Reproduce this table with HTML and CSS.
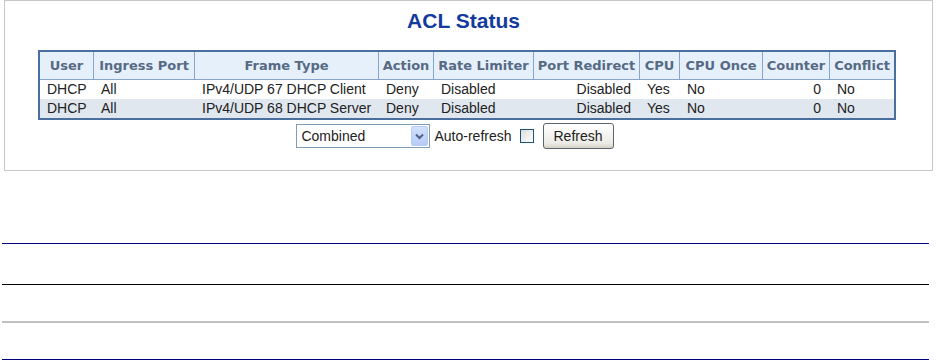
FILE: index.html
```html
<!DOCTYPE html>
<html lang="en">
<head>
  <meta charset="UTF-8" />
  <title>ACL Status</title>
  <link rel="stylesheet" href="styles.css">
</head>

<body>
  <div class="panel">
    <h1>ACL Status</h1>

    <table class="acl">
      <colgroup>
        <col style="width:53px"><col style="width:101px"><col style="width:184px">
        <col style="width:55px"><col style="width:100px"><col style="width:106px">
        <col style="width:40px"><col style="width:83px"><col style="width:67px">
        <col style="width:65px">
      </colgroup>
      <thead>
        <tr>
          <th>User</th>
          <th>Ingress Port</th>
          <th>Frame Type</th>
          <th>Action</th>
          <th>Rate Limiter</th>
          <th>Port Redirect</th>
          <th>CPU</th>
          <th>CPU Once</th>
          <th>Counter</th>
          <th>Conflict</th>
        </tr>
      </thead>
      <tbody>
        <tr>
          <td>DHCP</td>
          <td>All</td>
          <td>IPv4/UDP 67 DHCP Client</td>
          <td>Deny</td>
          <td>Disabled</td>
          <td class="num">Disabled</td>
          <td>Yes</td>
          <td>No</td>
          <td class="num">0</td>
          <td>No</td>
        </tr>
        <tr class="alt">
          <td>DHCP</td>
          <td>All</td>
          <td>IPv4/UDP 68 DHCP Server</td>
          <td>Deny</td>
          <td>Disabled</td>
          <td class="num">Disabled</td>
          <td>Yes</td>
          <td>No</td>
          <td class="num">0</td>
          <td>No</td>
        </tr>
      </tbody>
    </table>

    <div class="controls">
      <span class="select-wrap">
        <select class="select">
          <option>Combined</option>
          <option>Static</option>
          <option>IP Source Guard</option>
        </select>
        <span class="select-btn">
          <svg width="9" height="7" viewBox="0 0 9 7"><path d="M1 1.5 L4.5 5 L8 1.5" fill="none" stroke="#4d6185" stroke-width="2"/></svg>
        </span>
      </span>
      <label class="auto">Auto-refresh <input type="checkbox" class="check"></label>
      <button class="refresh">Refresh</button>
    </div>
  </div>

  <div class="rules">
    <div class="rule navy"></div>
    <div class="rule black"></div>
    <div class="rule grey"></div>
    <div class="rule navy"></div>
  </div>
</body>
</html>
```

FILE: styles.css
```css
:root {
  --title: #133a9e;
  --grid: #4a6f9f;
  --grid-light: #86a5cc;
  --head-bg: #e6f0fb;
  --head-text: #566a84;
  --alt-bg: #e0e7ef;
  --text: #222;
}

* { box-sizing: border-box; }

body {
  margin: 0;
  font-family: "Liberation Sans", Arial, sans-serif;
  font-size: 14px;
  color: var(--text);
  background: #fff;
}

.panel {
  margin: 0 3px 0 4px;
  height: 171px;
  border: 1px solid #c8c8c8;
  padding-top: 8px;
}

h1 {
  margin: 0;
  padding-right: 10px;
  text-align: center;
  font-size: 21px;
  line-height: 24px;
  font-weight: 700;
  color: var(--title);
}

.acl {
  margin: 17px 0 0 33px;
  table-layout: fixed;
  width: 858px;
  border: 2px solid var(--grid);
  border-spacing: 0;
}

.acl th {
  height: 28px;
  padding: 0;
  font-family: "DejaVu Sans", Verdana, sans-serif;
  font-size: 13px;
  font-weight: 700;
  color: var(--head-text);
  background: var(--head-bg);
  border-left: 1px solid var(--grid-light);
  border-bottom: 1px solid var(--grid-light);
  white-space: nowrap;
  overflow: hidden;
}
.acl th:first-child { border-left: none; }

.acl td {
  height: 19px;
  padding: 0 8px;
  white-space: nowrap;
  line-height: 19px;
}
.acl td:first-child { padding-left: 7px; }
.acl td.num { text-align: right; }
.acl tr.alt td { background: var(--alt-bg); }

.controls {
  display: flex;
  justify-content: center;
  align-items: center;
  margin-top: 3px;
  padding-right: 27px;
}

.select-wrap {
  position: relative;
  display: inline-block;
}
.select {
  display: block;
  appearance: none;
  width: 134px;
  height: 24px;
  margin: 0;
  padding: 0 0 0 4px;
  border: 1px solid #7f9db9;
  border-radius: 0;
  background: #fff;
  font: 14px "Liberation Sans", Arial, sans-serif;
  color: var(--text);
}
/* XP style drop button sitting over the right end of the select */
.select-btn {
  position: absolute;
  top: 2px;
  right: 2px;
  width: 17px;
  height: 20px;
  display: flex;
  align-items: center;
  justify-content: center;
  background: linear-gradient(#d2e0fd, #b6cbf7);
  border: 1px solid #b9cbf3;
  border-radius: 2px;
  pointer-events: none;
}

.auto {
  display: flex;
  align-items: center;
  gap: 8px;
  margin-left: 4px;
}
.check {
  appearance: none;
  width: 14px;
  height: 14px;
  margin: 0;
  border: 1px solid #1c5180;
  background: linear-gradient(135deg, #dcdcd7, #fff);
}

.refresh {
  margin-left: 9px;
  width: 71px;
  height: 26px;
  padding: 0;
  font: 14px "Liberation Sans", Arial, sans-serif;
  color: var(--text);
  background: linear-gradient(#fff, #ecebe6 80%, #d6d0c5);
  border: 1px solid #5c6670;
  border-radius: 3px;
}

.rules {
  margin: 72px 7px 0 2px;
}
.rule { height: 1px; }
.rule + .rule { margin-top: 40px; }
.rule.navy { background: #000080; }
.rule.black { background: #000; }
.rule.black + .rule { margin-top: 36px; }
.rule.grey { height: 2px; background: #c0c0c0; }
.rule.grey + .rule { margin-top: 36px; }
```
